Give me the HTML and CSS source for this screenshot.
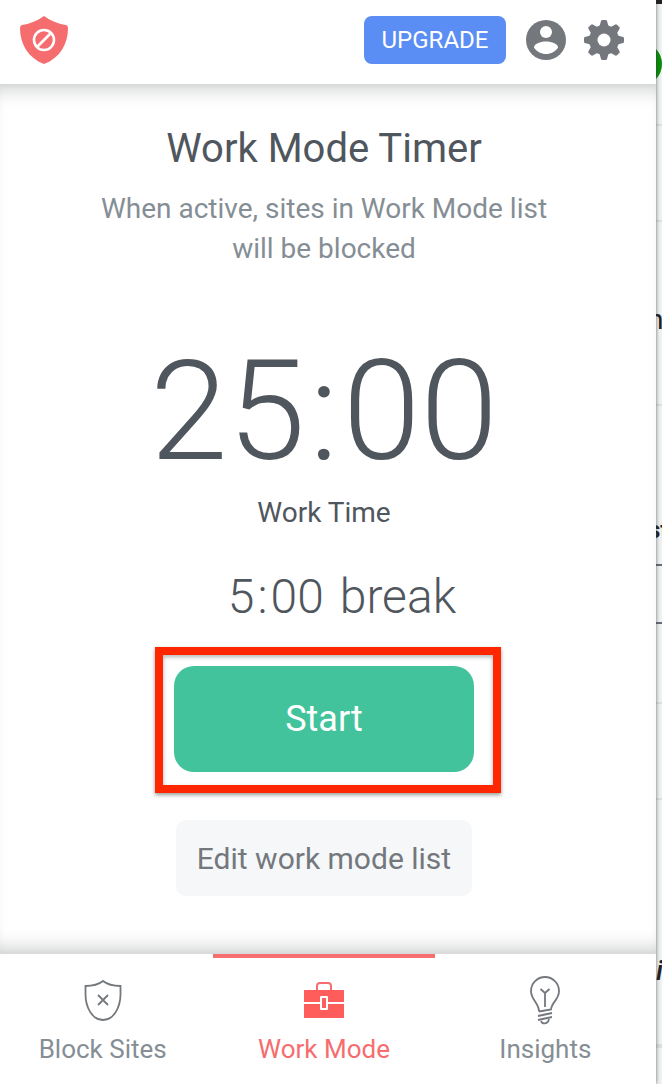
FILE: index.html
```html
<!DOCTYPE html>
<html lang="en">
<head>
    <meta charset="UTF-8">
    <meta name="viewport" content="width=device-width, initial-scale=1.0">
    <title>Work Mode Timer</title>
    <link rel="stylesheet" href="styles.css">
</head>
<body>
    <div class="popup">
        <header class="header">
            <a class="logo" href="#" aria-label="Home">
                <svg width="48" height="48" viewBox="0 0 48 48">
                    <path d="M24 0C17 5 9 8 2 9Q0 9.500 0 12C0 28 8 42 24 48C40 42 48 28 48 12Q48 9.500 46 9C39 8 31 5 24 0Z" fill="#f66d6f"/>
                    <circle cx="24" cy="24" r="10" fill="none" stroke="#fff" stroke-width="2.600"/>
                    <path d="M17 31L31 17" stroke="#fff" stroke-width="2.600"/>
                </svg>
            </a>
            <button type="button" class="upgrade">UPGRADE</button>
            <div class="header-icons">
                <button type="button" class="icon-button" aria-label="Account">
                    <svg width="40" height="40" viewBox="0 0 40 40">
                        <circle cx="20" cy="20" r="20" fill="#74787d"/>
                        <circle cx="20" cy="12" r="6" fill="#fff"/>
                        <path d="M8 27.500C8 24 14 21.500 20 21.500S32 24 32 27.500C29.500 31.500 25 34 20 34S10.500 31.500 8 27.500Z" fill="#fff"/>
                    </svg>
                </button>
                <button type="button" class="icon-button" aria-label="Settings">
                    <svg width="40" height="40" viewBox="0 0 40 40">
                        <g fill="#74787d">
                            <circle cx="20" cy="20" r="15"/>
                            <path id="tooth" d="M15 8L17 1Q17.300 0 18.300 0H21.700Q22.700 0 23 1L25 8Z"/>
                            <use href="#tooth" transform="rotate(45 20 20)"/>
                            <use href="#tooth" transform="rotate(90 20 20)"/>
                            <use href="#tooth" transform="rotate(135 20 20)"/>
                            <use href="#tooth" transform="rotate(180 20 20)"/>
                            <use href="#tooth" transform="rotate(225 20 20)"/>
                            <use href="#tooth" transform="rotate(270 20 20)"/>
                            <use href="#tooth" transform="rotate(315 20 20)"/>
                        </g>
                        <circle cx="20" cy="20" r="6.500" fill="#fff"/>
                    </svg>
                </button>
            </div>
        </header>

        <main class="main">
            <h1 class="title">Work Mode Timer</h1>
            <p class="subtitle">When active, sites in Work Mode list will be blocked</p>
            <div class="timer"><span>25</span><span>:</span><span>00</span></div>
            <p class="timer-label">Work Time</p>
            <div class="break"><span class="break-time"><span>5</span><span>:</span><span>00</span></span><span>break</span></div>
            <div class="start-box">
                <button type="button" class="start">Start</button>
                <div class="highlight"></div>
            </div>
            <button type="button" class="edit">Edit work mode list</button>
        </main>

        <nav class="tabs">
            <a class="tab" href="#">
                <svg width="48" height="48" viewBox="0 0 48 48" fill="none" stroke="#74787d" stroke-width="1.800">
                    <path d="M24 5C19 9 13 10 6.500 10V18C6.500 31 13 44 24 44S41.500 31 41.500 18V10C35 10 29 9 24 5Z"/>
                    <path d="M19 19L29 29M29 19L19 29"/>
                </svg>
                Block Sites
            </a>
            <a class="tab active" href="#">
                <svg width="48" height="48" viewBox="0 0 48 48">
                    <path d="M17 15V10Q17 7 20 7H28Q31 7 31 10V15" fill="none" stroke="#f66d6f" stroke-width="2"/>
                    <path d="M4 14H44V26H4ZM4 28H44V42H4Z" fill="#ff5c5c"/>
                    <rect x="20" y="20" width="8" height="14" rx="1" fill="#fff"/>
                    <rect x="22" y="22" width="4" height="10" fill="#ff5c5c"/>
                </svg>
                Work Mode
            </a>
            <a class="tab" href="#">
                <svg width="48" height="48" viewBox="0 0 48 48" fill="none" stroke="#74787d" stroke-width="1.800">
                    <path d="M18 35.500C18 27 10 24 10 15A14 14 0 0 1 38 15C38 24 30.500 26 30 33.500L18 35.500"/>
                    <path d="M19.500 13L24 17L28.500 13M24 17V31"/>
                    <path d="M17 40L31 37M17 44L31 41M20 45C21 48.500 27 48.500 28 43"/>
                </svg>
                Insights
            </a>
        </nav>
    </div>

    <div class="behind" aria-hidden="true">
        <div class="behind-top"></div>
        <div class="behind-row row-badge"><span class="badge"></span></div>
        <div class="behind-row row-small"></div>
        <div class="behind-row row-name"><span>n</span></div>
        <div class="behind-row row-status dark"><b>st</b></div>
        <div class="behind-row row-field dark"></div>
        <div class="behind-row row-gap"></div>
        <div class="behind-row row-small"></div>
        <div class="behind-row row-note"><i>is</i></div>
        <div class="behind-row"></div>
    </div>
</body>
</html>
```
FILE: styles.css
```css
* {
    box-sizing: border-box;
}

body {
    display: flex;
    min-height: 100vh;
    margin: 0;
    font-family: Roboto, sans-serif;
    color: #50565d;
    background-color: #f1f2f2;
    overflow-x: hidden;
}

button {
    font-family: inherit;
    border: none;
    padding: 0;
    cursor: pointer;
}

.popup {
    position: relative;
    z-index: 1;
    display: flex;
    flex: 1;
    flex-direction: column;
    min-width: 0;
    background-color: #fff;
    box-shadow: 0 0 4px rgba(40, 50, 60, 0.7);
}

.header {
    display: flex;
    align-items: center;
    gap: 20px;
    padding: 16px 32px 20px 20px;
}

.logo {
    display: flex;
    margin-right: auto;
}

.upgrade {
    width: 142px;
    height: 48px;
    border-radius: 8px;
    background-color: #5b8ef4;
    color: #fff;
    font-size: 24px;
}

.header-icons {
    display: flex;
    gap: 18px;
}

.icon-button {
    display: flex;
    background: none;
}

.main {
    display: flex;
    flex: 1;
    flex-direction: column;
    align-items: center;
    padding: 41px 8px 56px 0;
    box-shadow: inset 0 24px 20px -20px rgba(70, 75, 80, 0.3),
        inset 0 -24px 20px -20px rgba(70, 75, 80, 0.3),
        inset 0 0 10px rgba(70, 75, 80, 0.03);
}

.title {
    margin: 0 0 16px;
    font-size: 40px;
    font-weight: 400;
    line-height: 48px;
}

.subtitle {
    max-width: 460px;
    margin: 0;
    color: #858e95;
    font-size: 28px;
    line-height: 40px;
    text-align: center;
}

.timer {
    display: flex;
    gap: 4px;
    margin-top: 66px;
    font-size: 140px;
    font-weight: 300;
    line-height: 152px;
}

.timer-label {
    margin: 10px 0 0;
    font-size: 28px;
    line-height: 32px;
}

.break {
    display: flex;
    gap: 16px;
    margin-top: 40px;
    padding-left: 36px;
    font-size: 48px;
    font-weight: 300;
    line-height: 56px;
}

.break-time {
    display: flex;
    gap: 3px;
}

.start-box {
    position: relative;
    margin-top: 41px;
}

.start {
    display: block;
    width: 300px;
    height: 106px;
    border-radius: 20px;
    background-color: #43c39b;
    color: #fff;
    font-size: 36px;
}

.highlight {
    position: absolute;
    inset: -19px -27px -21px -19px;
    border: 8px solid #ff2600;
    box-shadow: 0 2px 4px rgba(0, 0, 0, 0.4), inset 0 2px 4px rgba(0, 0, 0, 0.3);
    pointer-events: none;
}

.edit {
    width: 296px;
    height: 76px;
    margin-top: 48px;
    border-radius: 10px;
    background-color: #f5f7f9;
    color: #74787d;
    font-size: 30px;
}

.tabs {
    display: grid;
    grid-template-columns: repeat(3, 1fr);
    margin-left: -8px;
}

.tab {
    display: flex;
    flex-direction: column;
    align-items: center;
    gap: 9px;
    padding: 18px 0 19px;
    border-top: 4px solid transparent;
    color: #858e95;
    font-size: 26px;
    line-height: 32px;
    text-decoration: none;
}

.tab svg {
    overflow: visible;
}

.tab.active {
    border-top-color: #f66d6f;
    color: #f66d6f;
}

/* edge of the page under the popup */
.behind {
    width: 6px;
    overflow: hidden;
    color: #222;
    font-size: 28px;
}

.behind-top {
    height: 4px;
    background-color: #222;
}

.behind-row {
    display: flex;
    align-items: center;
    border-bottom: 2px solid #dfe0e1;
}

.row-badge {
    height: 122px;
}

.badge {
    flex: none;
    width: 44px;
    height: 44px;
    margin-left: -38px;
    border-radius: 50%;
    background-color: #0a8f08;
}

.row-small {
    height: 96px;
}

.row-name {
    height: 184px;
    padding-top: 12px;
}

.row-name span,
.row-status b {
    margin-left: -8px;
}

.row-status {
    height: 160px;
    padding-top: 90px;
    font-size: 24px;
}

.row-field {
    height: 58px;
}

.row-gap {
    height: 80px;
}

.row-note {
    height: 246px;
    padding-top: 96px;
    font-weight: 500;
}

.dark {
    border-bottom-color: #6a6d78;
}
```
